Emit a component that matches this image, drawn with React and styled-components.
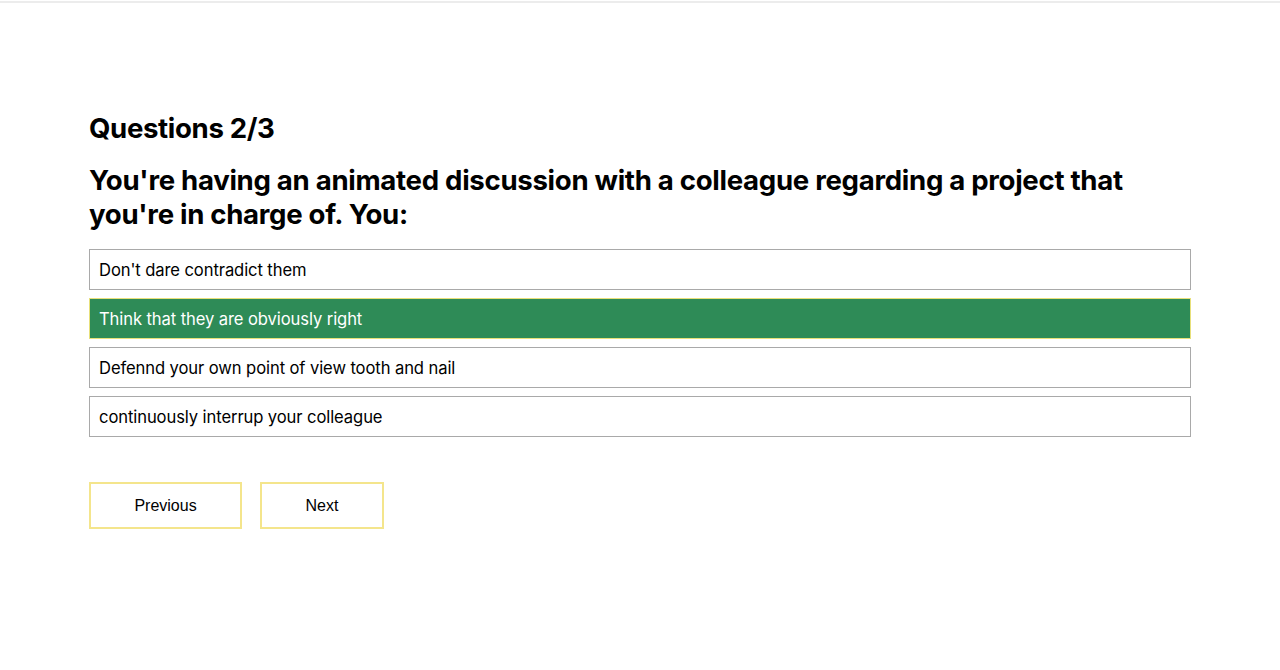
import React, { useState } from "react";
import styled, { createGlobalStyle } from "styled-components";

const GlobalStyle = createGlobalStyle`
  body {
    margin: 0;
    background: #ffffff;
    font-family: Inter, "Liberation Sans", sans-serif;
    color: #000000;
  }
`;

const TopRule = styled.div`
  height: 2px;
  margin-top: 1px;
  background: #ececec;
`;

const Page = styled.div`
  display: flex;
  flex-direction: column;
  padding: 108px 89px 0 89px;
`;

const Counter = styled.h2`
  margin: 0;
  font-size: 27.6px;
  font-weight: 700;
  line-height: 34px;
  letter-spacing: -0.35px;
`;

const Question = styled.h1`
  margin: 18px 0 18px 0;
  font-size: 27.6px;
  font-weight: 700;
  line-height: 34px;
  letter-spacing: -0.3px;
  max-width: 1102px;
`;

const Options = styled.div`
  display: flex;
  flex-direction: column;
  gap: 8px;
  width: 1102px;
`;

const Option = styled.div`
  height: 41px;
  box-sizing: border-box;
  display: flex;
  align-items: center;
  padding: 0 9px;
  font-size: 16.6px;
  letter-spacing: -0.1px;
  cursor: pointer;
  border: 1px solid ${(p) => (p.$selected ? "#e8e07a" : "#a9a9a9")};
  background: ${(p) => (p.$selected ? "#2e8b57" : "#ffffff")};
  color: ${(p) => (p.$selected ? "#ffffff" : "#000000")};
`;

const Actions = styled.div`
  display: flex;
  gap: 18px;
  margin-top: 45px;
`;

const NavButton = styled.button`
  box-sizing: border-box;
  width: ${(p) => p.$width}px;
  height: 47px;
  border: 2px solid #f4e58c;
  background: #ffffff;
  font-family: "Liberation Sans", Arial, sans-serif;
  font-size: 16px;
  color: #000000;
  cursor: pointer;
`;

const answers = [
  "Don't dare contradict them",
  "Think that they are obviously right",
  "Defennd your own point of view tooth and nail",
  "continuously interrup your colleague",
];

export default function App() {
  const [selected, setSelected] = useState(1);

  return (
    <>
      <GlobalStyle />
      <TopRule />
      <Page>
        <Counter>Questions 2/3</Counter>
        <Question>
          You're having an animated discussion with a colleague regarding a
          project that you're in charge of. You:
        </Question>
        <Options>
          {answers.map((a, i) => (
            <Option key={a} $selected={i === selected} onClick={() => setSelected(i)}>
              {a}
            </Option>
          ))}
        </Options>
        <Actions>
          <NavButton $width={153}>Previous</NavButton>
          <NavButton $width={124}>Next</NavButton>
        </Actions>
      </Page>
    </>
  );
}
